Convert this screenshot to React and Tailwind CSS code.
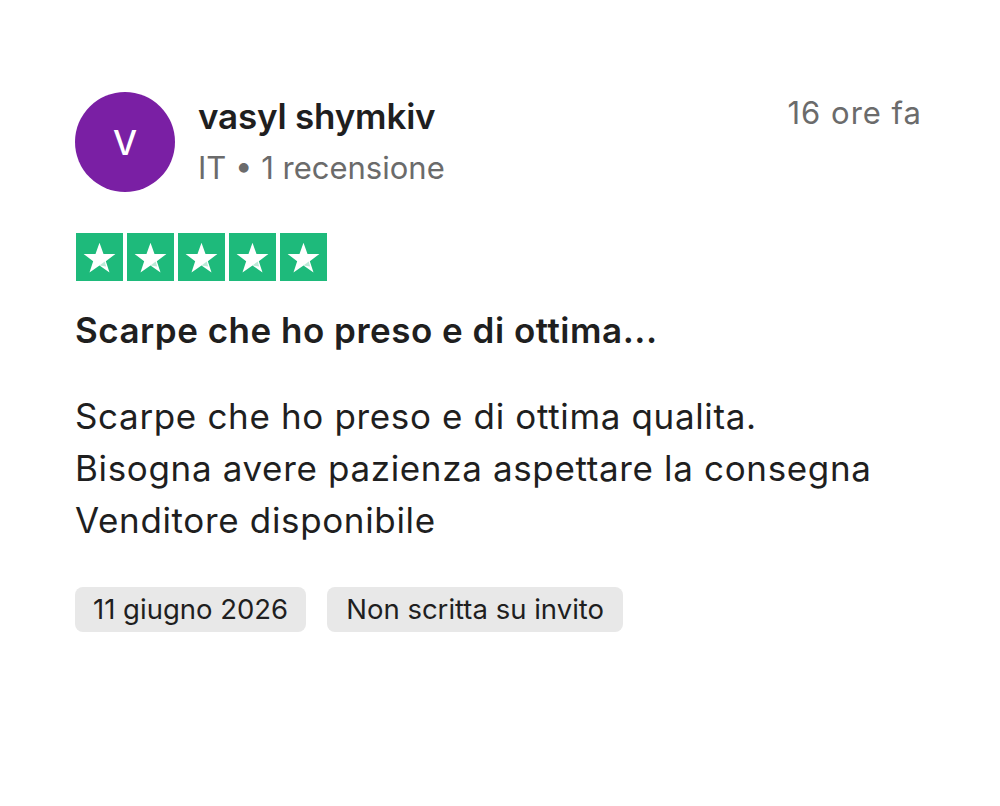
import React from "react";

function Star() {
  return (
    <svg viewBox="0 0 24 24" className="w-[37px] h-[37px]">
      <path
        d="M12 2.5l2.6 7.3h7.7l-6.2 4.6 2.4 7.4L12 17.2l-6.5 4.6 2.4-7.4-6.2-4.6h7.7z"
        fill="#ffffff"
      />
      <path d="M15.4 14.6l0.9 3.3-4.3-0.7z" fill="#1eba7b" opacity="0.3" />
    </svg>
  );
}

export default function App() {
  return (
    <div
      className="w-[1000px] h-[806px] bg-white text-[#1f1f1f]"
      style={{ fontFamily: "Inter, 'Noto Sans', sans-serif" }}
    >
      <div className="pl-[75px] pr-[78px] pt-[92px]">
        <div className="flex items-start">
          <div className="w-[100px] h-[100px] rounded-full bg-[#7a1fa4] flex items-center justify-center text-white text-[34px] font-medium shrink-0">
            V
          </div>
          <div className="ml-[23px] flex-1 pt-[4px]">
            <div className="text-[35px] font-semibold leading-[40px] tracking-[-0.2px]">
              vasyl shymkiv
            </div>
            <div className="mt-[14px] text-[31px] leading-[36px] text-[#6b6b6b]">
              IT • 1 recensione
            </div>
          </div>
          <div className="pt-[1px] text-[31px] leading-[40px] tracking-[1px] text-[#6b6b6b]">
            16 ore fa
          </div>
        </div>

        <div className="mt-[41px] flex gap-[4px] pl-[1px]">
          {[0, 1, 2, 3, 4].map((i) => (
            <div
              key={i}
              className="w-[47px] h-[48px] bg-[#1eba7b] flex items-center justify-center"
            >
              <Star />
            </div>
          ))}
        </div>

        <div className="mt-[29px] text-[35px] font-semibold leading-[40px] tracking-[0.5px]">
          Scarpe che ho preso e di ottima...
        </div>

        <div className="mt-[40px] text-[35px] leading-[52px] tracking-[0.65px]">
          <div>Scarpe che ho preso e di ottima qualita.</div>
          <div>Bisogna avere pazienza aspettare la consegna</div>
          <div>Venditore disponibile</div>
        </div>

        <div className="mt-[41px] flex gap-[21px]">
          <div className="h-[45px] px-[18px] rounded-[8px] bg-[#e8e8e8] flex items-center text-[27.5px]">
            11 giugno 2026
          </div>
          <div className="h-[45px] px-[19px] rounded-[8px] bg-[#e8e8e8] flex items-center text-[27.5px]">
            Non scritta su invito
          </div>
        </div>
      </div>
    </div>
  );
}
